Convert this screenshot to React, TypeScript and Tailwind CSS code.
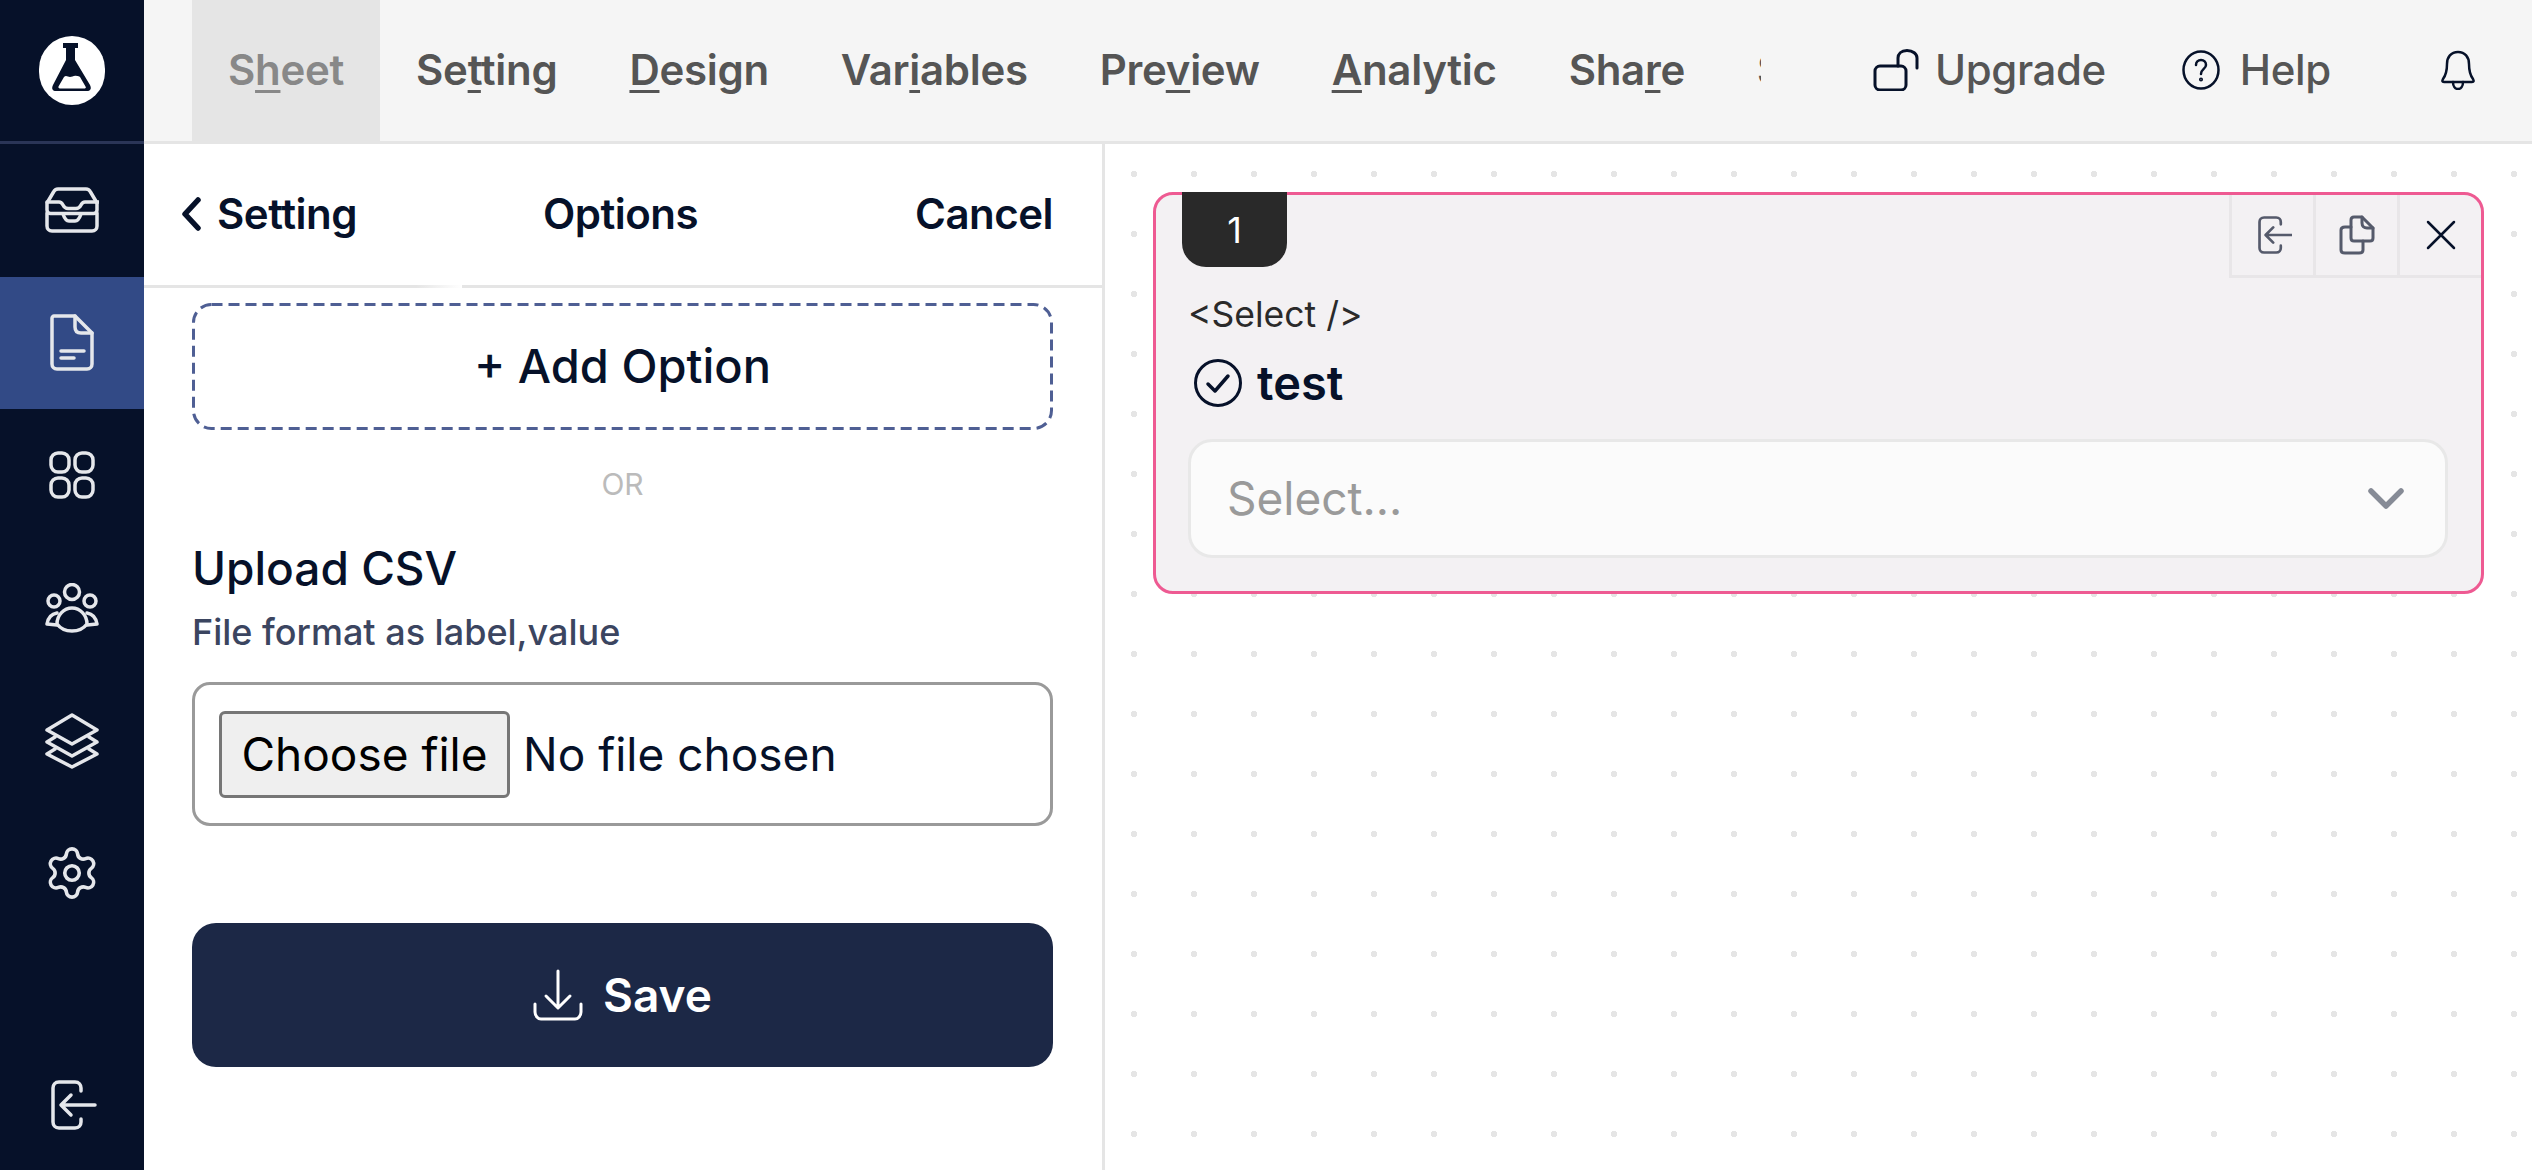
import { Settings } from "lucide-react";
import type { ReactNode } from "react";

const tabs: { before: string; key: string; after: string }[] = [
  { before: "S", key: "h", after: "eet" },
  { before: "Se", key: "t", after: "ting" },
  { before: "", key: "D", after: "esign" },
  { before: "Var", key: "i", after: "ables" },
  { before: "Pre", key: "v", after: "iew" },
  { before: "", key: "A", after: "nalytic" },
  { before: "Sha", key: "r", after: "e" },
];

function Svg({ w, h, children, stroke = "currentColor", sw = 3 }: { w: number; h: number; children: ReactNode; stroke?: string; sw?: number }) {
  return (
    <svg width={w} height={h} viewBox={`0 0 ${w} ${h}`} fill="none" stroke={stroke} strokeWidth={sw} strokeLinecap="round" strokeLinejoin="round">
      {children}
    </svg>
  );
}

function InboxIcon() {
  return (
    <Svg w={54} h={46} sw={3.5}>
      <path d="M13 2h28c2 0 3.5 1 4.5 3L52 16v7c0 2-1.5 3.5-3.5 3.5h-43C3.500 26.500 2 25 2 23v-7L8.500 5C9.500 3 11 2 13 2z" />
      <path d="M2 15h12c2 0 3 1 4 3s3 3.500 5 3.500h8c2 0 4-1.500 5-3.500s2-3 4-3h14" />
      <path d="M2 26v13c0 3 2 5 5 5h40c3 0 5-2 5-5V26" />
      <path d="M18 27c1 3 3 7 6 7h6c3 0 5-4 6-7" />
    </Svg>
  );
}

function DocIcon() {
  return (
    <Svg w={44} h={57} sw={3.5}>
      <path d="M4 2h21l17 17v31c0 3-2 5-5 5H7c-3 0-5-2-5-5V4c0-1 1-2 2-2z" />
      <path d="M25 2v11c0 4 2 6 6 6h11" />
      <path d="M11 37h23M11 44h13" />
    </Svg>
  );
}

function GridIcon() {
  return (
    <Svg w={46} h={48} sw={3.5}>
      <rect x="2" y="2" width="18" height="19" rx="7" />
      <rect x="26" y="2" width="18" height="19" rx="7" />
      <rect x="2" y="27" width="18" height="19" rx="7" />
      <rect x="26" y="27" width="18" height="19" rx="7" />
    </Svg>
  );
}

function UsersIcon() {
  return (
    <Svg w={54} h={50} sw={3.5}>
      <circle cx="27" cy="9" r="7.500" />
      <circle cx="9" cy="18" r="6" />
      <circle cx="45" cy="18" r="6" />
      <path d="M12 41c0-9 7-16 15-16s15 7 15 16c-3 4-9 7-15 7s-12-3-15-7z" />
      <path d="M12 30c-6 1-9 5-10 11l10 1M42 30c6 1 9 5 10 11l-10 1" />
    </Svg>
  );
}

function LayersIcon() {
  return (
    <Svg w={54} h={56} sw={3.5}>
      <path d="M27 2l25 15-25 14L2 17z" />
      <path d="M10 24l-8 5 25 14 25-14-8-5" />
      <path d="M10 36l-8 5 25 13 25-13-8-5" />
    </Svg>
  );
}

function ExitIcon({ stroke, scale = 1 }: { stroke?: string; scale?: number }) {
  return (
    <svg width={46 * scale} height={50 * scale} viewBox="0 0 46 50" fill="none" stroke={stroke ?? "currentColor"} strokeWidth={3.500} strokeLinecap="round" strokeLinejoin="round">
      <path d="M30 11V8c0-3-2-6-6-6H8C4 2 2 5 2 8v34c0 3 2 6 6 6h16c4 0 6-3 6-6v-3" />
      <path d="M44 25H11M20 15L10 25l10 10" />
    </svg>
  );
}

function Logo() {
  return (
    <div className="h-[69px] w-[66px] rounded-full bg-white">
      <svg width="66" height="69" viewBox="0 0 66 69">
        <path d="M24 7h15v5h-3v12l15 25c2 4 0 6-3 6H17c-3 0-5-2-3-6l13-25V12h-3z" fill="#061129" />
        <path d="M19.500 50.500L25 41c2-2 4 0 6 0s4-2 7-1c1 0 2 0 3 1l5.500 9.500c1 1.500 0 2-2 2H22c-2 0-3-.500-2.500-2z" fill="#fff" />
      </svg>
    </div>
  );
}

const sideItems = [
  { icon: <InboxIcon />, active: false },
  { icon: <DocIcon />, active: true },
  { icon: <GridIcon />, active: false },
  { icon: <UsersIcon />, active: false },
  { icon: <LayersIcon />, active: false },
  { icon: <Settings size={58} strokeWidth={1.5} />, active: false },
];

function Sidebar() {
  return (
    <aside className="flex h-full w-[144px] shrink-0 flex-col bg-[#061129] text-[#e5e7eb]">
      <div className="flex h-[141px] shrink-0 items-center justify-center">
        <Logo />
      </div>
      <div className="h-[3px] shrink-0 bg-[#2a3557]" />
      {sideItems.map((item, i) => (
        <div key={i} className={`flex h-[132.600px] shrink-0 items-center justify-center ${item.active ? "bg-[#324a86]" : ""}`}>
          {item.icon}
        </div>
      ))}
      <div className="mt-auto mb-[40px] flex justify-center pl-[4px]">
        <ExitIcon />
      </div>
    </aside>
  );
}

function TopBar() {
  return (
    <header className="flex h-[144px] shrink-0 items-stretch border-b-[3px] border-[#e5e5e5] bg-[#f5f5f5] pl-[48px]">
      <nav className="flex w-[1569px] shrink-0 overflow-hidden text-[42px] font-semibold tracking-[-0.3px] text-[#555555]">
        {tabs.map((t, i) => (
          <div key={i} className={`flex shrink-0 items-center px-[36px] pb-[2px] ${i === 0 ? "bg-[#e5e5e5] text-[#888888]" : ""}`}>
            <span>
              {t.before}
              <span className="underline decoration-[3px] underline-offset-[5px]">{t.key}</span>
              {t.after}
            </span>
          </div>
        ))}
        <div className="flex w-[60px] shrink-0 items-center pb-[2px] pl-[36px]" aria-hidden="true">S</div>
      </nav>
      <div className="ml-[112px] flex items-center pb-[2px] text-[42px] font-medium tracking-[-0.4px] text-[#555555]">
        <Svg w={46} h={42} stroke="#061129" sw={3}>
          <rect x="2" y="17" width="31" height="24" rx="5" />
          <path d="M25 17V9c0-4 3-7.500 9-7.500 6 0 10 3.500 10 7.500v10" />
        </Svg>
        <span className="ml-[16px]">Upgrade</span>
        <span className="ml-[76px] flex items-center">
          <Svg w={38} h={40} stroke="#061129" sw={2.500}>
            <ellipse cx="19" cy="20" rx="17.500" ry="18.500" />
            <path d="M14 15c0-3 2-5 5-5s5 2 5 5c0 4-5 4-5 9" />
            <circle cx="19" cy="29.500" r="0.800" />
          </Svg>
          <span className="ml-[20px]">Help</span>
        </span>
        <span className="ml-[108px]">
          <Svg w={38} h={40} stroke="#061129" sw={2.500}>
            <path d="M19 2c-7 0-11 5-11 12 0 8-1 11-4 15-1 2-1 3 1 3h28c2 0 2-1 1-3-3-4-4-7-4-15 0-7-4-12-11-12z" />
            <path d="M14 32c0 4 2 7 5 7s5-3 5-7" />
          </Svg>
        </span>
      </div>
    </header>
  );
}

function OptionsPanel() {
  return (
    <section className="h-full w-[961px] shrink-0 border-r-[3px] border-[#e5e5e5] bg-white text-[#061129]">
      <div className="relative flex h-[144px] items-center border-b-[3px] border-[#e5e5e5] pr-[49px] pb-[2px] pl-[36px] text-[42px] font-semibold tracking-[-0.5px]">
        <svg width="22" height="34" viewBox="0 0 22 34" fill="none" stroke="#061129" strokeWidth="5.500" strokeLinecap="round" strokeLinejoin="round">
          <path d="M18 3L5 17l13 14" />
        </svg>
        <span className="ml-[15px]">Setting</span>
        <span className="ml-[186px]">Options</span>
        <span className="ml-auto">Cancel</span>
        <div className="absolute -bottom-[3px] left-[272px] h-[3px] w-[46px] bg-gradient-to-r from-[#e5e5e5] to-white" />
      </div>
      <div className="pr-[49px] pl-[48px]">
        <div className="relative mt-[15px] flex h-[127px] items-center justify-center text-[47px] font-medium">
          <svg className="absolute inset-0 h-full w-full" fill="none">
            <rect x="1.500" y="1.500" width="858" height="124" rx="18" stroke="#4f5f94" strokeWidth="3" strokeDasharray="11 6" />
          </svg>
          + Add Option
        </div>
        <p className="mt-[36px] text-center text-[30px] leading-[36px] text-[#bbbbbb]">OR</p>
        <h3 className="mt-[38px] text-[46px] leading-[56px] font-medium">Upload CSV</h3>
        <p className="mt-[14px] text-[36px] leading-[44px] font-medium text-[#3b4560]">File format as label,value</p>
        <div className="mt-[28px] flex h-[144px] items-center rounded-[18px] border-[3px] border-[#9a9a9a] pl-[24px] text-[46px]">
          <div className="flex h-[87px] w-[291px] items-center justify-center rounded-[6px] border-[3px] border-[#767676] bg-[#efefef] text-black">Choose file</div>
          <span className="ml-[13px]">No file chosen</span>
        </div>
        <button className="mt-[97px] flex h-[144px] w-full items-center justify-center rounded-[24px] bg-[#1c2846] text-[46px] font-semibold text-white">
          <Svg w={50} h={52} stroke="#ffffff" sw={3}>
            <path d="M25 2v36M13 27l12 12 12-12" />
            <path d="M2 35v8c0 4 3 7 6 7h34c3 0 6-3 6-7v-8" />
          </Svg>
          <span className="ml-[20px]">Save</span>
        </button>
      </div>
    </section>
  );
}

function QuestionCard() {
  return (
    <div className="relative ml-[48px] h-[402px] w-[1331px] rounded-[20px] border-[3px] border-[#ee5a92] bg-[#f3f1f3] text-[#061129]">
      <div className="absolute -top-[3px] left-[26px] flex h-[75px] w-[105px] items-center justify-center rounded-b-[24px] bg-[#292929] text-[36px] text-white">1</div>
      <div className="absolute top-0 right-0 flex h-[83px] border-b-[3px] border-[#e8e6e8]">
        <div className="flex w-[84px] items-center justify-center border-l-[3px] border-[#e8e6e8] pl-[5px]">
          <ExitIcon stroke="#555a6b" scale={0.76} />
        </div>
        <div className="flex w-[84px] items-center justify-center border-l-[3px] border-[#e8e6e8]">
          <Svg w={36} h={40} stroke="#555a6b" sw={3}>
            <path d="M12 5c0-2 1-3 3-3h8l11 11v10c0 2-1 3-3 3H15c-2 0-3-1-3-3z" />
            <path d="M23 2v6c0 3 2 5 5 5h6" />
            <path d="M12 12H6c-2 0-4 1-4 3v20c0 2 2 3 4 3h14c2 0 4-1 4-3v-9" />
          </Svg>
        </div>
        <div className="flex w-[84px] items-center justify-center border-l-[3px] border-[#e8e6e8]">
          <Svg w={30} h={30} stroke="#061129" sw={2.500}>
            <path d="M2 2l26 26M28 2L2 28" />
          </Svg>
        </div>
      </div>
      <div className="pt-[98px] pr-[33px] pl-[32px]">
        <p className="text-[35.500px] leading-[44px] text-[#2a2a2a]">{"<Select />"}</p>
        <div className="mt-[21px] flex h-[50px] items-center pl-[5px]">
          <svg width="50" height="50" viewBox="0 0 50 50" fill="none" stroke="#061129" strokeLinecap="round" strokeLinejoin="round">
            <circle cx="25" cy="25" r="22.500" strokeWidth="3" />
            <path d="M15 26l7 7 13-15" strokeWidth="3.500" />
          </svg>
          <span className="ml-[14px] text-[47px] font-semibold">test</span>
        </div>
        <div className="mt-[31px] flex h-[119px] items-center justify-between rounded-[24px] border-[3px] border-[#e8e8e8] bg-[#fbfbfb] pr-[41px] pl-[36px] text-[46px] text-[#9a9a9a]">
          <span>Select...</span>
          <svg width="36" height="22" viewBox="0 0 36 22" fill="none" stroke="#868b96" strokeWidth="5.500" strokeLinecap="round" strokeLinejoin="round">
            <path d="M3 3l15 15L33 3" />
          </svg>
        </div>
      </div>
    </div>
  );
}

export default function App() {
  return (
    <div className="flex h-[1170px] w-[2532px] overflow-hidden bg-white font-['Inter',sans-serif]">
      <Sidebar />
      <div className="flex min-w-0 flex-1 flex-col">
        <TopBar />
        <main className="flex min-h-0 flex-1">
          <OptionsPanel />
          <div className="flex-1 bg-[radial-gradient(circle,#e5e5e5_3px,transparent_3.5px)] bg-[size:60px_60px] bg-[position:-1px_0px] pt-[48px]">
            <QuestionCard />
          </div>
        </main>
      </div>
    </div>
  );
}
